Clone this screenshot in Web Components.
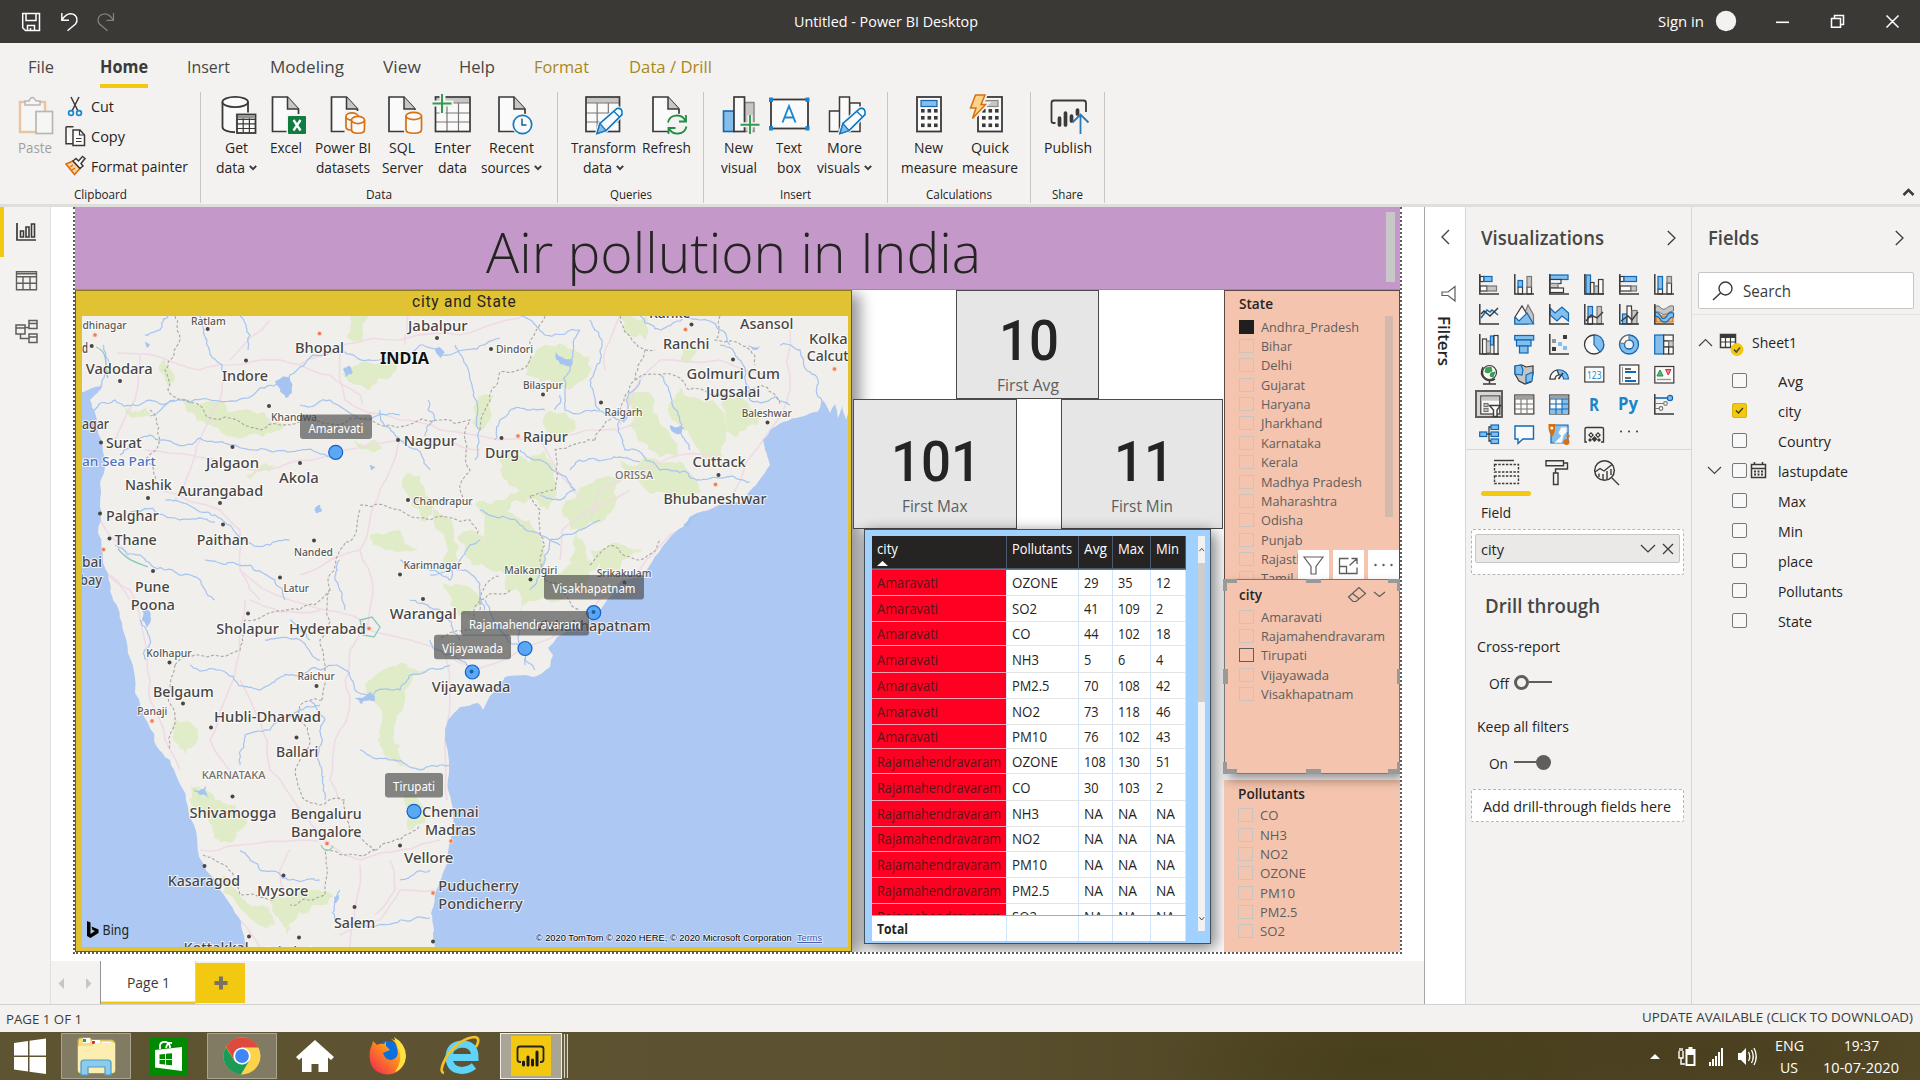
<!DOCTYPE html>
<html lang="en">
<head>
<meta charset="utf-8">
<title>Untitled - Power BI Desktop</title>
<style>
html,body{margin:0;padding:0}
body{width:1920px;height:1080px;overflow:hidden;background:#f3f2f1;font-family:"Open Sans","Noto Sans","Liberation Sans",sans-serif;color:#252423}
</style>
</head>
<body>
<power-app></power-app>
<script>
const define=(name,css,html)=>customElements.define(name,class extends HTMLElement{
  connectedCallback(){
    if(this.shadowRoot)return;
    const root=this.attachShadow({mode:'open'});
    const t=document.createElement('template');
    t.innerHTML='<style>*{box-sizing:border-box}svg{display:block;flex:none;overflow:visible}'+css+'</style>'+(typeof html==='function'?html(this):html);
    root.appendChild(document.importNode(t.content,true));
  }
});
// Text squeezed or stretched to a known advance width.
customElements.define('fit-text',class extends HTMLElement{
  connectedCallback(){
    if(this.shadowRoot)return;
    const w=+this.getAttribute('w'),s=this.getAttribute('s')||15,h=this.getAttribute('h')||20;
    this.attachShadow({mode:'open'}).innerHTML=`<style>:host{display:block;flex:none;width:${w}px;height:${h}px;font-size:${s}px;line-height:${h}px;white-space:nowrap}span{display:inline-block;transform-origin:0 50%}</style><span><slot></slot></span>`;
    const span=this.shadowRoot.querySelector('span');
    const n=span.getBoundingClientRect().width;
    if(n>0)span.style.transform=`scaleX(${w/n})`;
  }
});
const T=(t,w,s=15,st='',h=20)=>`<fit-text w="${w}" s="${s}" h="${h}" style="${st}">${t}</fit-text>`;
const S=(x,y,w,h,body,st='')=>`<svg width="${w}" height="${h}" viewBox="${x} ${y} ${w} ${h}" fill="none" stroke-width="1.2" style="${st}">${body}</svg>`;
const K='#3b3a39';

/* ---------- title bar ---------- */
define('title-bar',`:host{display:flex;height:43px;background:#3b3936;color:#fff;align-items:center}
.l{display:flex;width:794px;padding-left:20px;gap:14px}.r{display:flex;margin-left:auto;align-items:center}`,
`<div class="l">${S(20,11,24,24,'<path stroke="#fff" stroke-width="1.5" d="M22.7 14.5H39.5V31.5H25.5L22.7 28.8ZM26 14.5V21.5H36V14.5M27.5 31.5V26.5H34.5V31.5M30.5 29v2"/>')}
${S(58,11,22,24,'<path stroke="#fff" stroke-width="1.4" d="M61.8 14V21.3H69M62 21C65 16 69 14 73 15.2C77.5 17 78 22 75.5 25L67.5 31.8"/>')}
${S(94,11,22,24,'<path stroke="#85827f" stroke-width="1.2" d="M113.5 14V21.3H106.5M113.3 21C110 16 106 14 102.5 15.2C97.5 17 97 22 99.5 25L107.5 31.8"/>')}</div>
${T('Untitled - Power BI Desktop',184,15,'margin-top:-2px')}
<div class="r">${T('Sign in',46,15,'margin-top:-2px')}${S(1704,11,216,22,`<ellipse cx="1726" cy="21" rx="10.2" ry="10.2" fill="#f3f2f1"/><path stroke="#fff" stroke-width="1.6" d="M1776 22.3H1789"/><path stroke="#fff" stroke-width="1.5" d="M1831.5 18.5H1840.5V27.2H1831.5ZM1834.5 18V15.5H1843.5V24.5H1841M1886.5 15.5L1898.5 27.5M1898.5 15.5L1886.5 27.5"/>`,'')}</div>`);

/* ---------- ribbon ---------- */
const doc=(x)=>`<path fill="#fafafa" stroke="${K}" stroke-width="1.7" d="M${x} 97H${x+15}L${x+26} 109V131.5H${x}Z"/><path stroke="${K}" stroke-width="1.5" fill="#c8c6c4" d="M${x+15} 97V109H${x+26}"/>`;
const grid=(x,y,w,h)=>`<rect x="${x}" y="${y}" width="${w}" height="${h}" fill="#fafafa"/><rect x="${x}" y="${y}" width="${w}" height="6" fill="#c8c6c4"/><path stroke="#797775" stroke-width="1.2" d="M${x} ${y+6}h${w}M${x} ${y+16}h${w}M${x} ${y+25}h${w}M${x+w/3} ${y+6}v${h-6}M${x+w*2/3} ${y+6}v${h-6}"/><rect x="${x}" y="${y}" width="${w}" height="${h}" stroke="${K}" stroke-width="1.7"/>`;
const cyl=(x,y,w,h,c)=>`<path fill="#fafafa" stroke="${c}" stroke-width="1.7" d="M${x} ${y+4}V${y+h-4}C${x} ${y+h+1} ${x+w} ${y+h+1} ${x+w} ${y+h-4}V${y+4}"/><ellipse cx="${x+w/2}" cy="${y+4}" rx="${w/2}" ry="3.6" fill="#fafafa" stroke="${c}" stroke-width="1.7"/>`;
const pencil=(x,y)=>`<path d="M${x} ${y}L${x+3} ${y-10}L${x+20} ${y-25}Q${x+26} ${y-26} ${x+25} ${y-19}L${x+9} ${y-3}Z" fill="#fafafa" stroke="#f3f2f1" stroke-width="4"/><path d="M${x} ${y}L${x+3} ${y-10}L${x+20} ${y-25}Q${x+26} ${y-26} ${x+25} ${y-19}L${x+9} ${y-3}Z" fill="#fafafa" stroke="#0078c8" stroke-width="1.6"/><path d="M${x} ${y}L${x+3} ${y-10}L${x+9} ${y-3}Z" fill="#83beec" stroke="#1a75b8"/><path stroke="#0078c8" d="M${x+17} ${y-22}l5 5"/>`;
const calc=(x,c,cs)=>`<rect x="${x}" y="97" width="24" height="34.5" fill="#fafafa" stroke="${K}" stroke-width="1.8"/><rect x="${x+4}" y="100.5" width="16" height="6" fill="${c}" stroke="${cs}"/><g fill="${K}">${[110,117,124.5].map(y=>[4,10.5,17].map(d=>`<rect x="${x+d}" y="${y-1}" width="3.6" height="3.6"/>`).join('')).join('')}</g>`;
const ic={
get:`<path fill="#fafafa" stroke="${K}" stroke-width="1.8" d="M222.5 102V127C222.5 134 248 134 248 127V102"/><ellipse cx="235.2" cy="102" rx="12.8" ry="5.2" fill="#fafafa" stroke="${K}" stroke-width="1.8"/><rect x="235" y="112.5" width="22" height="23" fill="#f3f2f1"/><rect x="237" y="114.5" width="18.5" height="18.5" fill="#fafafa" stroke="${K}" stroke-width="1.8"/><path d="M237 119.3h18.500M237 123.8h18.500M237 128.500h18.500M243.2 118v15M249.4 118v15" stroke="${K}"/><rect x="238" y="115.300" width="16.500" height="3" fill="#979593"/>`,
excel:doc(272.5)+`<rect x="286.500" y="114" width="21" height="22" fill="#f3f2f1"/><rect x="288" y="116" width="18" height="18" rx="1" fill="#107c41"/><path d="M293.500 120l7 10.500M300.500 120l-7 10.500" stroke="#fff" stroke-width="2.300"/>`,
pbi:doc(331)+`<path fill="#f3f2f1" d="M344 111H359V114H366V135H344Z"/>`+cyl(345.500,112.500,12,18,'#d87010')+cyl(351,116,13,17.500,'#d87010'),
sql:doc(389)+`<rect x="404" y="110" width="20" height="25" fill="#f3f2f1"/>`+cyl(406,112,15.500,21.500,'#d87010'),
enter:grid(435,97,34.500,34.500)+`<path stroke="#f3f2f1" stroke-width="6" d="M442 92v22M432 103.500h21"/><path stroke="#2f9c51" stroke-width="2" d="M441.500 94v19M432 103.500h19"/>`,
recent:doc(499)+`<circle cx="522.500" cy="124.500" r="11" fill="#f3f2f1"/><circle cx="522.500" cy="124.500" r="9.200" fill="#fafafa" stroke="#0f7cc4" stroke-width="1.700"/><path stroke="#1a5f95" stroke-width="1.500" d="M522 118.500V125h4.500"/>`,
transform:grid(586,97,33.500,34.500)+pencil(597,133.500),
refresh:doc(653)+`<circle cx="677" cy="124.500" r="11" fill="#f3f2f1"/><path stroke="#218d42" stroke-width="1.800" d="M668 122.500C669.500 114 682 113 685.500 121M686 115v6.500h-7M686.500 126.500C684.500 135 673 136 669 128.500M668.500 134v-6h7"/>`,
newv:`<rect x="723" y="111" width="10.500" height="20.500" fill="#83beec" stroke="#1a66a8" stroke-width="1.600"/><rect x="744" y="102.500" width="9.500" height="29" fill="#c8c6c4" stroke="#8a8886" stroke-width="1.500"/><rect x="733.500" y="97" width="10.500" height="34.500" fill="#fafafa" stroke="${K}" stroke-width="1.700"/><path stroke="#f3f2f1" stroke-width="5" d="M740 124.700h19M749.500 115v19"/><path stroke="#2f9c51" stroke-width="1.900" d="M740 124.700h19M749.500 115v19"/>`,
text:`<rect x="771" y="99.500" width="37" height="29" fill="#fafafa" stroke="${K}" stroke-width="1.800"/><g fill="#1a86d0"><rect x="769" y="97.500" width="4" height="4.500"/><rect x="805.500" y="97.500" width="4" height="4.500"/><rect x="769" y="126" width="4" height="4.500"/><rect x="805.500" y="126" width="4" height="4.500"/></g><path stroke="#1a86d0" stroke-width="1.900" d="M782.500 122.500L789 106l6.500 16.500M784.500 117.500h9"/>`,
more:`<rect x="829" y="111" width="10.500" height="20.500" fill="#fafafa" stroke="${K}" stroke-width="1.500"/><rect x="849" y="103" width="10.500" height="28.500" fill="#fafafa" stroke="${K}" stroke-width="1.500"/><rect x="839" y="97" width="10" height="34.500" fill="#fafafa" stroke="${K}" stroke-width="1.500"/>`+pencil(839.500,133.500),
newm:calc(916.500,'#83beec','#1a66a8'),
quick:calc(978,'#c8c6c4','#8a8886')+`<path d="M975.500 95H985L981 104.500H985.500L972.500 118.500L976 108H970.500Z" fill="#fbd38a" stroke="#f3f2f1" stroke-width="5"/><path d="M975.500 95H985L981 104.500H985.500L972.500 118.500L976 108H970.500Z" fill="#fbd38a" stroke="#d87010" stroke-width="1.500"/>`,
pub:`<path stroke="${K}" stroke-width="1.800" d="M1055 123H1053Q1051 123 1051 121V103Q1051 100.500 1053.500 100.500H1083Q1085.500 100.500 1085.500 103V112"/><path stroke="${K}" stroke-width="3.700" stroke-linecap="round" d="M1059 118v7M1065 113v12M1071 116v5M1077 110v4"/><path stroke="#f3f2f1" stroke-width="5" d="M1080 134V116"/><path stroke="#2a7ab8" stroke-width="1.800" d="M1080 134V115M1072 122.500L1080 114.500L1088 122.500"/>`
};
define('ribbon-button',`:host{display:flex;flex-direction:column;align-items:center;width:var(--w);margin-left:var(--ml,0)}
.x{height:41.500px}.y{display:flex;gap:4px;height:20px;align-items:center}`,e=>{
 const c=+e.getAttribute('cx'),l=e.getAttribute('lines').split('|').map(a=>a.split(','));
 return `<div class="x">${S(c-20,95,40,40,ic[e.getAttribute('icon')])}</div>`+l.map(a=>`<div class="y">${T(a[0],a[1],15)}${a[2]?'<svg width="8" height="6" viewBox="0 0 8 6" fill="none" style="margin-top:2px"><path d="M.8 .8L4 4.200L7.200 .8" stroke="#3b3a39" stroke-width="1.900"/></svg>':''}</div>`).join('')});
define('ribbon-group',`:host{display:flex;flex-direction:column;width:var(--w);height:111px;border-right:1px solid #c8c6c4}
.b{display:flex;height:99px;padding-top:3px}.l{display:flex;justify-content:center}`,
e=>`<div class="b"><slot></slot></div><div class="l">${T(e.getAttribute('label'),e.getAttribute('lw'),12.5,'',16)}</div>`);
const btns=(start,arr)=>{let p=start;return arr.map(([c,w,i,l])=>{const ml=c-w/2-p;p=c+w/2;return `<ribbon-button cx="${c}" icon="${i}" lines="${l}" style="--w:${w}px;--ml:${ml}px"></ribbon-button>`}).join('')};
define('clipboard-tools',`:host{display:flex;padding:1px 0 0 15px}.p{width:40px;display:flex;flex-direction:column;align-items:center;color:#a19f9d}.c{padding-left:10px}.r{display:flex;height:30px;align-items:center;gap:4px}`,
`<div class="p">${S(17,96,40,40,`<g opacity=".55"><rect x="22" y="102" width="25" height="30" fill="#fafafa" stroke="#e0a060" stroke-width="2.400"/><path d="M27 105V101H31Q34 94 38 101H42V105Z" fill="#fafafa" stroke="#8a8886" stroke-width="1.500"/><rect x="38" y="111.500" width="16.500" height="22" fill="#fafafa" stroke="#8a8886" stroke-width="1.700"/></g>`)}<div style="height:.5px"></div>${T('Paste',34,15)}</div>
<div class="c" style="margin-top:-5px"><div class="r">${S(65,96,22,22,`<path stroke="${K}" stroke-width="1.500" d="M71 98L78 112M79 98L72 112"/><g stroke="#1a86d0" stroke-width="1.700"><circle cx="71" cy="114" r="2.400"/><circle cx="79" cy="114" r="2.400"/></g>`)}${T('Cut',23)}</div>
<div class="r">${S(65,126,22,22,`<path fill="#fafafa" stroke="${K}" stroke-width="1.500" d="M66 127.700h7.500M66 127.700v17H73"/><path fill="#fafafa" stroke="${K}" stroke-width="1.500" d="M73 131h7l4.500 5v10.500H73Z"/><path stroke="${K}" d="M79.500 131v5h5M76 139.500h5.500M76 142.500h5.500"/>`)}${T('Copy',34)}</div>
<div class="r">${S(65,156,22,22,`<path fill="#fbd0a0" stroke="#d87010" stroke-width="1.600" d="M66 165L73 162L80 169.500L74.500 175.500Z"/><path fill="#fafafa" stroke="${K}" stroke-width="1.500" d="M73 162L76 159.500L78.500 162L82.500 157.500L85 159.500L81 164.500L83 167L80 169.500Z"/><path stroke="#d87010" d="M70 168l3-2M72 171l3-2"/>`)}${T('Format painter',97)}</div></div>`);
define('ribbon-bar',`:host{display:block;height:164px;background:#f3f2f1;border-bottom:3px solid #dfdedd}
nav{display:flex;height:49px;padding-left:28px;align-items:flex-start;color:#484644}
nav div{display:flex;flex-direction:column;height:45px;padding-top:12.500px;margin-right:var(--g)}
nav .on{border-bottom:4px solid #f2c811;font-weight:700;color:#3b3a39}.g{color:#a8871c}
.row{display:flex;height:112px;align-items:flex-start}.end{margin-left:auto;padding:94px 4px 0 0}`,
`<nav>${[['File',26,46],['Home',48,39,'on'],['Insert',43,40],['Modeling',74,39],['View',38,38],['Help',36,39],['Format',55,40,'g'],['Data / Drill',83,0,'g']].map(a=>`<div class="${a[3]||''}" style="--g:${a[2]}px">${T(a[0],a[1],17,'',22)}</div>`).join('')}</nav>
<div class="row">
<ribbon-group label="Clipboard" lw="53" style="--w:201px"><clipboard-tools></clipboard-tools></ribbon-group>
<ribbon-group label="Data" lw="26" style="--w:357px">${btns(201,[[236,46,'get','Get,23|data,29,1'],[286,40,'excel','Excel,32'],[342.500,58,'pbi','Power BI,56|datasets,54'],[402,42,'sql','SQL,26|Server,41'],[452.500,42,'enter','Enter,37|data,29'],[511,64,'recent','Recent,45|sources,49,1']])}</ribbon-group>
<ribbon-group label="Queries" lw="42" style="--w:146px">${btns(558,[[603,66,'transform','Transform,65|data,29,1'],[666,50,'refresh','Refresh,49']])}</ribbon-group>
<ribbon-group label="Insert" lw="31" style="--w:184px">${btns(704,[[738.500,40,'newv','New,29|visual,36'],[789,30,'text','Text,26|box,24'],[844.500,56,'more','More,35|visuals,43,1']])}</ribbon-group>
<ribbon-group label="Calculations" lw="66" style="--w:143px">${btns(888,[[928.500,56,'newm','New,29|measure,56'],[990,56,'quick','Quick,38|measure,56']])}</ribbon-group>
<ribbon-group label="Share" lw="31" style="--w:74px">${btns(1031,[[1067.500,50,'pub','Publish,48']])}</ribbon-group>
<div class="end">${S(1900,186,16,12,`<path stroke="${K}" stroke-width="2.500" d="M1903.500 195L1908.500 190L1913.500 195"/>`)}</div></div>`);

/* ---------- left rail ---------- */
define('nav-rail',`:host{display:block;width:51px;height:797px;border-right:1px solid #e1dfdd;background:#f3f2f1}div{height:49.500px;border-left:4px solid transparent;display:flex;align-items:center;padding-left:10px}.on{border-color:#f2c811}`,
`<div class="on">${S(14,220,24,24,`<path stroke="${K}" stroke-width="1.700" d="M17 223V240H36"/><path stroke="${K}" stroke-width="1.600" d="M20.500 231h3v6h-3ZM26 227h3v10h-3ZM31.500 224h3v13h-3Z"/>`)}</div>
<div>${S(14,269.700,24,24,`<path stroke="#605e5c" stroke-width="1.400" d="M16.500 272.500H36.500V290.500H16.500ZM16.500 277.500H36.500M16.500 284H36.500M23 277.500V290.500M30 277.500V290.500M16.500 274.500h20"/>`)}</div>
<div>${S(14,319,24,24,`<path stroke="#605e5c" stroke-width="1.500" d="M16 325H25V334H16ZM16 328H25M29 320.500H37V328.500H29ZM29 323.500H37M29 334H37V342.500H29ZM29 337H37M25 327.500H29M20.500 334V338.500H29"/>`)}</div>`);

/* ---------- map ---------- */
let seed=7;const rnd=()=>{seed=(seed*16807)%2147483647;return seed/2147483647-.5};
const rough=(p,n=3,a=.22)=>{for(let k=0;k<n;k++){const q=[];for(let i=0;i<p.length-1;i++){const [x,y]=p[i],[u,v]=p[i+1],d=Math.hypot(u-x,v-y)*a;q.push(p[i],[(x+u)/2+rnd()*d,(y+v)/2+rnd()*d])}q.push(p[p.length-1]);p=q}return p};
const P=s=>s.trim().split(/\s+/).map(a=>a.split(',').map(Number));
const D=(p,z)=>'M'+p.map(a=>a[0].toFixed(1)+' '+a[1].toFixed(1)).join('L')+(z?'Z':'');
const wild=(s,n,a)=>D(rough(P(s),n,a));
const blob=s=>{const p=P(s);p.push(p[0]);return D(rough(p,3,.45),1)};
const west=D([...rough(P('82,392 88,390 103,386 90,400 95,413 98,433 105,467 100,483 102,513 98,533 103,563 110,583 113,600 122,623 128,653 135,693 148,723 157,747 170,760 178,780 188,807 197,837 203,863 220,890 235,913 243,933 247,948'),2,.2),[82,948]],1);
const east=D([...rough(P('849,405 846,420 842,405 838,418 835,404 830,413 823,400 817,412 800,417 783,422 770,430 763,440 765,450 770,465 758,482 748,493 743,503 713,508 693,515 683,527 672,535 662,547 650,565 637,577 622,580 607,600 593,617 570,630 548,648 553,655 550,667 533,677 505,677 493,693 483,710 478,703 460,707 448,720 445,740 449,767 449,793 453,810 455,827 448,863 443,873 435,893 431,913 434,930 435,948'),2,.16),[849,948]],1);
const greens=['180,397 220,400 227,412 265,413 285,425 250,434 215,427 187,412','343,375 360,362 397,358 390,378 370,390 350,382','350,316 370,316 360,342 347,338','482,395 494,395 482,430 472,422','407,473 425,490 432,515 420,522 412,500','370,535 400,530 418,548 400,552 375,545','458,540 470,530 500,545 545,550 540,580 520,590 490,570 465,555','475,505 500,500 520,490 545,450 548,510 515,500 500,515 480,512','433,508 452,520 458,560 440,572','525,375 545,345 575,350 592,370 575,385 550,380','620,316 647,316 645,340 628,335','683,350 700,345 690,362 680,360','680,388 712,400 728,430 722,455 700,460 688,430 672,420','625,400 650,393 668,430 678,455 650,450 630,425','722,400 748,403 757,425 735,437 725,420','620,460 655,458 692,475 702,492 660,492 630,480','570,500 595,480 622,470 617,500 590,522 570,530','500,455 530,463 553,480 545,492 515,487 500,470','488,510 530,520 547,560 535,590 505,590 485,560','590,550 620,545 642,550 620,572 600,577','515,580 550,575 580,563 603,558 587,590 550,602 520,612','383,670 402,663 428,672 405,690 397,715 400,745 407,767 390,760 378,740 372,700 365,685','175,718 190,722 198,740 185,754 173,740','190,785 215,800 235,805 247,820 235,838 220,842 205,815 192,805','270,900 290,897 335,893 325,905 300,912 288,935 275,915','220,873 240,895 262,905 275,925 265,928 240,908','442,583 465,585 482,600 470,617 450,605','403,795 418,800 425,822 408,830','125,408 145,408 150,416 130,417','545,415 565,412 575,430 560,440 548,432','355,440 375,440 382,448 362,450','165,355 175,380 168,385 160,365','570,560 575,530 585,545 580,575','245,475 275,465 270,472 250,480'];
const rivers=['103,345 110,370 100,390','150,416 180,400 260,388 290,375 345,352 420,345 500,338','200,316 207,340 222,365 225,380','240,316 250,335 248,350','120,455 150,435 165,440 200,438 255,450 290,452 330,457','380,410 400,440 430,470','168,316 160,330 145,335','300,405 330,400 370,420 400,415','428,400 435,420 425,436','455,345 470,380 480,430 475,460','520,316 545,335 580,330','580,330 570,370 565,410','565,410 600,411 620,420 625,450 640,452 660,470 700,480 720,478 750,482','545,410 530,410 510,410 500,420 495,440','590,320 600,350 590,380 600,410','660,375 672,400 680,430 690,450','640,380 628,410 622,420','720,345 740,360 750,400 790,405','780,345 800,350 818,380 825,410','570,470 580,460 605,460 640,462','520,450 540,460 575,490 560,500 540,495','165,500 200,512 215,515 230,525 270,545 290,540','130,512 180,520 215,522','115,545 140,555 165,570 200,580 215,600','205,560 240,565 275,580 285,600','340,560 335,580 345,610','480,540 460,560 450,580 430,570 400,560','430,575 465,570 480,590 485,610','485,600 500,630 520,645 525,665','520,620 523,650 535,670','530,590 545,560 550,540 600,520','190,665 220,670 260,690 300,675 335,665','335,665 355,690 370,697 400,690 410,675 450,665','240,765 245,735 270,730 300,710 320,705','310,700 325,720 318,760 325,800','360,750 390,760 420,770 450,765','265,640 300,640 320,660','140,620 150,640 145,660','290,620 310,640','240,850 260,870 290,880 320,880','340,890 335,920 360,925 400,920 430,918','400,880 430,870','90,412 115,400 140,405 175,400','560,395 555,410','480,510 520,525 560,545','640,316 660,330 700,320 730,345','430,640 460,660 475,670','410,600 440,610 460,640'];
const roads=['117,353 160,357 200,370 225,365 260,360 300,365 330,375 360,395 362,405','228,370 220,400 200,440 190,470 175,500','230,360 270,320','340,350 345,400 400,420 440,430 500,440 545,440 600,430 640,425','300,365 340,345 400,340 460,335 520,318','400,440 440,440 480,450','145,450 190,455 225,465 260,470 300,460 345,450 400,440','405,345 408,316','130,490 160,490 220,510 240,530 240,570 250,590 260,600','104,570 130,590 140,620 150,680 150,700 165,740 180,770','240,570 290,600 350,615 368,625','368,625 350,650 345,680 350,700 335,740 330,780 340,800','368,630 410,640 440,650 475,670','368,625 372,580 360,550 370,520 380,490 390,470 400,440','245,600 240,650 225,700 210,740 240,780','240,680 260,720 270,770 300,810 325,840','200,850 240,845 300,840 330,842','330,845 360,860 400,850 440,840','360,865 355,910 350,947','445,650 450,700 445,750 447,800','475,670 520,650 580,620 630,580 670,535 730,500 770,430','770,430 790,390 790,330','620,425 640,380 660,360 720,360 780,375','590,520 600,490 640,470 680,455 720,458','560,560 562,530 590,510 630,490','620,316 605,350 605,370','540,440 565,480 580,500','95,440 80,460','110,575 130,600','250,600 280,612 320,610','260,947 240,920','290,850 280,870 285,895','435,890 400,890 380,920 340,935','390,860 395,890 375,915','140,355 135,400 110,450','100,520 130,560','360,550 330,560 300,575'];
const borders=['175,316 180,340 165,370 180,400 210,418 260,430 290,425 310,415 340,425 390,425 440,420 470,420 465,440','150,410 160,440 145,460 155,480','465,440 470,470 460,490 472,505','545,316 530,360 500,372 490,400 480,430','620,316 632,340 645,350 635,380 620,410 595,440','635,380 680,378 690,390 725,395 760,385 780,405','645,350 655,350','720,316 715,340 750,350 755,365','595,440 555,450 555,490 530,495 540,510 545,545 540,560 545,580','545,580 560,590 580,610','360,505 400,510 430,520 470,520 478,535','360,510 355,535 340,550 330,590 320,640 322,700','175,665 200,655 240,650 245,620 300,610 330,590','175,665 170,690 175,720 168,750','322,700 300,705 300,720 310,740 300,760 305,800 320,805 345,800 350,830 375,850','375,850 345,855 325,850 325,895 290,905','203,855 225,865 240,895 275,900','510,590 480,600 470,630 440,640','590,565 610,545 640,560 660,540','480,610 490,580 500,575','375,850 400,840 420,825'];
const lab=[
// text,x,baseline,width,kind
['dhinagar',82.500,328.700,44,1],['Ratlam',191,324.700,34.700,1],['Jabalpur',408,330.700,59.700],['d',82,353,6],['Bhopal',295,353,49],['INDIA',380,363.500,49,2],['Dindori',496,353,37,1],['Vadodara',85.700,374,67],['Indore',222,381,46],['Bilaspur',523,388.700,39.700,1],['Khandwa',271,420.700,46,1],['agar',82,428.700,27],['Surat',106,448,35.700],['an Sea Part',82,465.700,73.700,3],['Jalgaon',206,468,53],['Nashik',125,490,46.700],['Aurangabad',177.700,496,85.500],['Akola',279,482.700,39.700],['Nagpur',403.700,446,53],['Chandrapur',413,504.500,59.700,1],['Palghar',106,520.700,52.700],['Paithan',196.700,544.700,52],['Thane',114.500,545.300,42.300],['Nanded',294,556,39,1],['bai',82,567,20],['bay',80,585,22],['Karimnagar',403.500,569.300,58,1],['Malkangiri',504.300,574.300,53,1],['Pune',135,592,34.700],['Latur',283.500,591.700,25.500,1],
['Ranke',649,317.700,41.500],['Asansol',740,329.300,53.300],['Ranchi',663,349,46.300],['Kolka',809,343.700,38.500],['Calcut',806.700,361.300,42],['Golmuri Cum',686.500,379.300,93.500],['Jugsalai',706,396.700,54.300],['Raigarh',604.500,416.300,38,1],['Baleshwar',741.700,417.300,50,1],['Raipur',523,442.300,44.700],['Durg',485,458,34],['Cuttack',692.500,467.300,53.300],['ORISSA',615,478.500,38,4],['Bhubaneshwar',663.500,504,103],['Srikakulam',596.700,576.500,54.700,1],
['Poona',130.700,609.700,44.300],['Warangal',389.700,619,67],['Sholapur',216.300,633.700,62.500],['Hyderabad',289,634.300,76.700],['Kolhapur',146.300,657.300,45.400,1],['Raichur',297.500,680.300,37.300,1],['Belgaum',153,696.700,60.700],['Vijayawada',431.700,691.700,78.700],['Panaji',137.300,715.300,30,1],['Hubli-Dharwad',214,721.700,107],['Ballari',276,757.300,42.300],['KARNATAKA',201.700,779.300,64,4],['Shivamogga',189.500,817.700,87],['Bengaluru',290.700,819.300,71],['Bangalore',291,837.300,70.500],['Chennai',422,817.300,56.700],['Madras',425,835.300,51],['Vellore',404,863,49.300],['Kasaragod',167.700,886,72.300],['Mysore',257,896,51.300],['Puducherry',438.300,891.300,80.400],['Pondicherry',438.300,909.300,84.400],['Salem',334,927.500,41.300],['Kottakkal',183.500,953,65],['Coimbatore',262,957,72],['Vishakhapatnam',535,631.300,115.700]];
const kinds=[[15,'#484644',500],[11.500,'#5a5856',500],[15.500,'#111',700],[12,'#4f74c4',500],[11,'#75716e',500]];
const dots='91.700,346 207.700,329 437,338 491,349 120,381 246,360.500 269,406 101,442.500 232.500,447 300,463 398,440 501.500,438 148,498 220,503 408,500 100,513.500 223,524.500 109.500,538.500 314,540.500 153,571 280,577.500 400,574.500 543,394.500 601,402.500 691.500,324.500 733,359.500 767.500,422.500 718.500,475 530.500,579.500 624.500,582.500 423,599 248,613.500 169.500,662.500 316.500,686 183,703.500 211,727.500 296.500,737.500 232.500,796.500 400,845.500 204.500,866 283.500,875.500 354.500,907 249,936.500 299,937.500 433,941.500'.split(' ').map(a=>a.split(','));
const red='95,335 319.500,333.500 518,436 685.500,329.500 834.500,369 715.500,484.500 103.500,549.500 369,628.500 152,721 327,843.500 451,841 433,893'.split(' ').map(a=>a.split(','));
const txt=([t,x,y,w,k=0])=>`<text x="${x}" y="${y}" textLength="${w}" lengthAdjust="spacingAndGlyphs" font-size="${kinds[k][0]}" fill="${kinds[k][1]}" font-weight="${kinds[k][2]}">${t}</text>`;
const tips=[['Amaravati',300,414.500,72,308.500,55],['Visakhapatnam',544,575,100,552.500,83],['Rajamahendravaram',461,611,128,469,111.500],['Vijayawada',434,634.700,77,442,61],['Tirupati',385,773,58,393,42]];
define('map-visual',`:host{display:block;width:777px;height:662px;background:#e0c232;border:1px solid #6b5d1c;border-top-color:#8f7a1c;box-shadow:8px 4px 14px rgba(0,0,0,.42);box-sizing:border-box}
.t{height:25px;display:flex;justify-content:center;font-family:Roboto,sans-serif;padding:1px 0 0 2px}.m{margin-left:6px;font-family:"Noto Sans","Open Sans",sans-serif}`,
()=>`<div class="t">${T('city and State',104.500,16,'letter-spacing:.8px')}</div><svg class="m" style="overflow:hidden" width="766" height="631" viewBox="82 316 766 631" fill="none">
<rect x="82" y="316" width="766" height="631" fill="#f1efeb"/>
<g fill="#dfebc5" opacity=".9">${greens.map(g=>`<path d="${blob(g)}"/>`).join('')}</g>
<g stroke="#efdbe6" stroke-width="1.600">${roads.map(g=>`<path d="${wild(g,2,.14)}"/>`).join('')}</g>
<g stroke="#a6c4f1" stroke-width="1.200">${rivers.map(g=>`<path d="${wild(g,4,.32)}"/>`).join('')}</g>
<g stroke="#aaa6a4" stroke-width="1.100" stroke-dasharray="3 2">${borders.map(g=>`<path d="${wild(g,3,.3)}"/>`).join('')}</g>
<path fill="#adc8f2" d="${west}"/><path fill="#adc8f2" d="${east}"/>
<g fill="#a6c4f1">${['275,382 290,378 292,390 286,398 280,392','343,370 350,366 352,374 345,377','436,348 445,352 440,358','556,352 572,358 570,366 560,364','670,425 684,428 680,434 673,432','760,346 755,350 748,346','315,508 320,505 322,512 316,513','193,788 206,786 210,798 200,795','355,698 370,692 375,700 362,704','142,610 150,612 147,628','330,895 340,895 335,903','144,342 150,344 147,348','620,418 628,416 624,423','370,465 376,468 371,470','683,524 693,516 700,513 690,526'].map(g=>`<path d="${blob(g)}"/>`).join('')}</g>
<g stroke="#8dcabb" stroke-width="1.300"><path d="M96 347C110 352 104 368 108 378M118 549C128 560 130 560 148 567M360 620L372 617L380 627L374 637L363 635ZM321 845C324 852 330 852 333 846"/></g>
<g fill="#484644">${dots.map(d=>`<circle cx="${d[0]}" cy="${d[1]}" r="2"/>`).join('')}</g>
<g>${red.map(d=>`<circle cx="${d[0]}" cy="${d[1]}" r="2.600" fill="#f9d5c9"/><circle cx="${d[0]}" cy="${d[1]}" r="1.700" fill="#e87f52"/>`).join('')}</g>
<g paint-order="stroke" stroke="#fff" stroke-opacity=".75" stroke-width="2">${lab.map(txt).join('')}</g>
<g fill="#4ea2f4" fill-opacity=".92" stroke="#1260d0" stroke-width="1.200">${[[335.700,452.300],[593.700,612.700],[525,648.500],[472.300,672],[414,811.300]].map(c=>`<circle cx="${c[0]}" cy="${c[1]}" r="7"/>`).join('')}</g><circle cx="593.500" cy="612" r="2" fill="#1e5fa8"/><circle cx="471.500" cy="671.500" r="2" fill="#1e5fa8"/>
${tips.map(t=>`<rect x="${t[1]}" y="${t[2]}" width="${t[3]}" height="24.500" rx="3" fill="#4a4a4a" fill-opacity=".66"/>`).join('')}
<g fill="#fff" font-size="12">${tips.map(t=>`<text x="${t[4]}" y="${t[2]+18.200}" textLength="${t[5]}" lengthAdjust="spacingAndGlyphs">${t[0]}</text>`).join('')}</g>
<path fill="#000" d="M87 921L90.500 922.500V934L95 931L92.500 930L91.500 926.500L98.500 929.500V933L90.500 938L87 936Z"/>
<text x="102.600" y="935.300" font-size="14.500" fill="#222" textLength="26.500" lengthAdjust="spacingAndGlyphs">Bing</text>
<g font-family="Liberation Sans" font-size="9.500" paint-order="stroke" stroke="#fff" stroke-opacity=".7" stroke-width="1.500"><text x="535.700" y="941" fill="#000" textLength="256" lengthAdjust="spacingAndGlyphs">© 2020 TomTom © 2020 HERE, © 2020 Microsoft Corporation</text><text x="797" y="941" fill="#3b56b0" text-decoration="underline" textLength="25" lengthAdjust="spacingAndGlyphs">Terms</text></g></svg>`);

/* ---------- cards and table ---------- */
define('card-visual',`:host{display:flex;flex-direction:column;align-items:center;width:var(--w);height:var(--h);background:#e6e6e6;border:1px solid #4a4a4a;padding-top:var(--p)}.v{font-family:Roboto,sans-serif;font-weight:500;color:#252423;display:flex;margin-left:3px}.l{color:#605e5c}`,
e=>`<div class="v">${T(e.getAttribute('value'),e.getAttribute('vw'),55,'',56)}</div><div class="l" style="margin-top:5px">${T(e.getAttribute('label'),e.getAttribute('lw'),16.500,'',22)}</div>`);
const R='Rajamahendravaram',A='Amaravati';
const rows=[[A,'OZONE',29,35,12,26.300],[A,'SO2',41,109,2,25.700],[A,'CO',44,102,18,24.500],[A,'NH3',5,6,4,27],[A,'PM2.5',70,108,42,25.500],[A,'NO2',73,118,46,25.600],[A,'PM10',76,102,43,24.700],[R,'OZONE',108,130,51,25.200],[R,'CO',30,103,2,26.500],[R,'NH3','NA','NA','NA',26],[R,'NO2','NA','NA','NA',24.700],[R,'PM10','NA','NA','NA',26],[R,'PM2.5','NA','NA','NA',26],[R,'SO2','NA','NA','NA',26]];
const pw={OZONE:46,SO2:25,CO:18.500,NH3:27,'PM2.5':37.500,NO2:28,PM10:35};
const nw=n=>n==='NA'?19:String(n).length*7.300;
define('table-visual',`:host{display:flex;width:347px;height:414.500px;background:#a0d1ff;border:1px solid #44505c;padding:6px 6px 3px 6.500px;box-shadow:6px 4px 14px rgba(0,0,0,.42),-4px 2px 12px rgba(0,0,0,.2)}
.t{width:314px}.r{display:grid;grid-template-columns:135px 72px 34px 38px 35px}.r>div{display:flex;align-items:center;border-right:1px solid #cfe6fb;border-bottom:1px solid #e4e4e4;background:#fff;padding:1px 0 0 5px}
.body .r>div:first-child{background:#ff0022;border-bottom-color:#ffa0b0;color:#5c1418}
.h>div{background:#252423;color:#fff;border-color:#4a5a6c;height:33px;padding-bottom:7px}.h{border-bottom:1.500px solid #118dff}
.body{height:345.500px;overflow:hidden;border-bottom:1.500px solid #7ab8f0}.f>div{height:25px;border-bottom:0;font-weight:700}
.s{width:7.500px;height:395px;margin-left:12px;background:#f1f1f1;display:flex;flex-direction:column}.s i{display:block;height:139px;background:#cdcdcd}
.c{position:relative}.c svg{position:absolute;left:5px;top:24.500px}`,
()=>`<div class="t"><div class="r h"><div class="c">${T('city',21,14)}<svg width="11" height="5"><path d="M0 5L5.500 0L11 5Z" fill="#fff"/></svg></div><div>${T('Pollutants',60,14)}</div><div>${T('Avg',23,14)}</div><div>${T('Max',26,14)}</div><div>${T('Min',23,14)}</div></div>
<div class="body">${rows.map(r=>`<div class="r" style="height:${r[5]}px"><div>${T(r[0],r[0]===A?61:124,14)}</div><div>${T(r[1],pw[r[1]],14)}</div>${[2,3,4].map(i=>`<div>${T(r[i],nw(r[i]),14)}</div>`).join('')}</div>`).join('')}</div>
<div class="r f"><div>${T('Total',31,14)}</div><div></div><div></div><div></div><div></div></div></div>
<div class="s"><svg width="7.500" height="26.500" viewBox="0 0 8 26"><path d="M1.500 15L4 12L6.500 15" stroke="#444" fill="none"/></svg><i></i><svg style="margin-top:auto" width="7.500" height="22" viewBox="0 0 8 22"><path d="M1.500 8L4 11L6.500 8" stroke="#444" fill="none"/></svg></div>`);

/* ---------- slicers ---------- */
const sw={Andhra_Pradesh:98,Bihar:31,Delhi:31,Gujarat:44,Haryana:49.500,Jharkhand:61.500,Karnataka:60,Kerala:37,'Madhya Pradesh':101,Maharashtra:76,Odisha:42,Punjab:41.500,Rajasthan:58,'Tamil Nadu':68,Amaravati:61,Rajamahendravaram:124,Tirupati:46,Vijayawada:68,Visakhapatnam:92.500,...pw};
define('slicer-visual',`:host{display:block;position:relative;width:176px;height:var(--h);background:#f4c4ae}
.in{height:100%;overflow:hidden;padding:var(--pt) 0 0 14px}.t{display:flex;height:var(--th);align-items:center;font-weight:600;padding-bottom:var(--pb)}
.r{display:flex;height:19.370px;align-items:center;gap:7.500px;color:#605e5c}.r i{width:14.500px;height:14px;border:1px solid #c8c4bf}.r i.on{background:#1f1f1f;border-color:#1f1f1f}.r i.hv{border-color:#605e5c}`,
e=>`<div class="in"><div class="t">${T(e.getAttribute('label'),e.getAttribute('lw'),14)}<slot name="head"></slot></div>${e.getAttribute('items').split(',').map(s=>`<div class="r"><i class="${e.getAttribute('checked')===s?'on':e.getAttribute('hover')===s?'hv':''}"></i>${T(s,sw[s],13.500)}</div>`).join('')}</div><slot></slot>`);

define('report-page',`:host{display:block;width:1373px;height:754px;background:#fff;padding-left:22px;overflow:hidden}
.p{width:1329px;height:747px;border:2px dotted #605e5c;border-top:0;overflow:hidden}
.b{height:83px;background:#c498c9;display:flex;justify-content:center;position:relative;padding:8px 8px 0 0;border-bottom:1px solid #a784aa}.b i{width:9px;height:70px;background:#c8c8c8;position:absolute;right:5px;top:5px}
.row{display:flex}.mid{width:372px;display:flex;flex-direction:column}.cards{display:flex;justify-content:space-between;padding:0 1px 0 .5px}
.bar{position:absolute;right:0;bottom:0;display:flex;gap:4px}.bar div{width:31px;height:29px;background:#fff}
.city{z-index:1;border:1px solid #777;box-shadow:4px 6px 10px rgba(0,0,0,.4)}
.city i{position:absolute;background:#999}.st{border:1px solid #5a4a44;border-width:1px 1px 0}`,
`<div class="p"><div class="b">${T('Air pollution in India',495,54.500,'font-weight:360',74)}<i></i></div>
<div class="row"><map-visual></map-visual>
<div class="mid"><card-visual value="10" vw="60" label="First Avg" lw="62" style="--w:143px;--h:109px;--p:22px;align-self:flex-start;margin-left:104px;box-sizing:border-box"></card-visual>
<div class="cards"><card-visual value="101" vw="90" label="First Max" lw="65.500" style="--w:164px;--h:130px;--p:34px;box-sizing:border-box"></card-visual><card-visual value="11" vw="60" label="First Min" lw="62" style="--w:162px;--h:130px;--p:34px;box-sizing:border-box"></card-visual></div>
<table-visual style="margin-left:12px;box-sizing:border-box"></table-visual></div>
<div><slicer-visual class="st" style="--h:288.500px;--pt:4px;--th:22px;--pb:3.500px;box-sizing:border-box" label="State" lw="34" checked="Andhra_Pradesh" items="Andhra_Pradesh,Bihar,Delhi,Gujarat,Haryana,Jharkhand,Karnataka,Kerala,Madhya Pradesh,Maharashtra,Odisha,Punjab,Rajasthan,Tamil Nadu"><div style="position:absolute;left:160px;top:25px;width:8px;height:201px;background:#d3b8ae"></div>
<div class="bar"><div>${S(1298.500,549.500,31,29,'<path stroke="#605e5c" d="M1304.500 556.500H1323.500L1316.500 566V573.500H1311.500V566Z"/>')}</div><div>${S(1333.500,549.500,31,29,'<path stroke="#605e5c" stroke-width="1.300" d="M1349 558H1340V573H1357.500V567M1340 566H1347V573M1350 565L1357.500 558M1352 558H1357.500V563.500"/>')}</div><div>${S(1368.500,549.500,31,29,'<path stroke="#605e5c" stroke-width="2.400" stroke-linecap="round" stroke-dasharray="0 8" d="M1376 564.500H1393"/>')}</div></div></slicer-visual>
<slicer-visual class="city" style="--h:195.500px;--pt:4.500px;--th:23px;--pb:1px;box-sizing:border-box" label="city" lw="23" hover="Tirupati" items="Amaravati,Rajamahendravaram,Tirupati,Vijayawada,Visakhapatnam"><span slot="head" style="margin-left:86px">${S(1348,586,40,20,'<path stroke="#605e5c" stroke-width="1.200" d="M1348.500 598L1359 588.500L1365.500 594.500L1356 602.500H1353ZM1352.500 594.500L1359.500 600M1374 593L1379.500 597.500L1385 593"/>')}</span>
<i style="left:-2px;top:-1px;width:14px;height:4px"></i><i style="left:-2px;top:-1px;width:4px;height:12px"></i><i style="left:81px;top:-1px;width:15px;height:4px"></i><i style="right:-1px;top:-1px;width:12px;height:4px"></i><i style="right:-1px;top:-1px;width:3px;height:12px"></i><i style="left:-2px;top:89px;width:5px;height:15px"></i><i style="right:-1px;top:89px;width:3px;height:15px"></i><i style="left:-2px;bottom:-1px;width:14px;height:5px"></i><i style="left:-2px;bottom:-1px;width:4px;height:12px"></i><i style="left:81px;bottom:-1px;width:15px;height:5px"></i><i style="right:-1px;bottom:-1px;width:12px;height:5px"></i><i style="right:-1px;bottom:-1px;width:3px;height:12px"></i></slicer-visual>
<slicer-visual style="--h:173px;--pt:3.500px;--th:22px;--pb:2px;margin-top:6px;box-sizing:border-box" label="Pollutants" lw="67" items="CO,NH3,NO2,OZONE,PM10,PM2.5,SO2"></slicer-visual></div>
</div></div>`);

/* ---------- page tabs ---------- */
define('page-tabs',`:host{display:flex;width:1373px;height:43px;background:#f3f2f1}.n{width:49px;display:flex;align-items:center}.t{width:96px;background:#fff;border:1px solid #979593;border-width:0 1px 0 1px;border-right-color:#d2d0ce;box-shadow:inset 0 -2.500px #f2c811;display:flex;align-items:center;justify-content:center;color:#3b3a39;padding-bottom:1px}.a{width:49px;height:40px;margin-top:2px;background:#f2c811;display:flex;align-items:center;justify-content:center}`,
`<div class="n">${S(51,970,49,24,'<path fill="#c8c6c4" d="M64 977V988L58.500 982.500ZM86 977V988L91.500 982.500Z"/>')}</div><div class="t">${T('Page 1',43,15)}</div><div class="a"><svg width="16" height="16"><path d="M8 1.500V14.500M1.500 8H14.500" stroke="#7a7360" stroke-width="4"/></svg></div>`);

/* ---------- filters pane ---------- */
define('filters-pane',`:host{display:flex;flex-direction:column;width:41px;height:797px;background:#fff;border-left:1px solid #a8a6a4}.v{writing-mode:vertical-rl;font-size:17px;font-weight:600;line-height:20px;letter-spacing:-.1px;margin:15px 0 0 9px;width:20px;color:#252423}`,
`${S(1425,207,40,94,'<path stroke="#484644" stroke-width="1.400" d="M1449 230L1442 237L1449 244"/><path stroke="#605e5c" stroke-width="1.200" d="M1455 286.500V301L1448 295.500H1442V292H1448Z"/>')}<div class="v">Filters</div>`);

/* ---------- visualizations pane ---------- */
const b=(x,y,w,h)=>`<rect x="${x}" y="${y}" width="${w}" height="${h}" fill="#83beec" stroke="#1268b3"/>`,
g=(x,y,w,h)=>`<rect x="${x}" y="${y}" width="${w}" height="${h}" fill="#c8c6c4" stroke="#797775"/>`,
w=(x,y,W,h)=>`<rect x="${x}" y="${y}" width="${W}" height="${h}" fill="#fafafa" stroke="${K}"/>`,
ax=`<path d="M.8 0V20H20" stroke="${K}" stroke-width="1.500"/>`,
L=(d,c=K,sw=1.300,f='none')=>`<path d="${d}" stroke="${c}" stroke-width="${sw}" fill="${f}"/>`,
F='#83beec',Bs='#1268b3';
const viz=[
w(1,2.500,4,5)+b(5,2.500,8,5)+w(1,12,7,5)+g(8,12,9.500,5)+ax,
w(4,13,4.500,7)+b(4,6.500,4.500,6.500)+w(13,13,4.500,7)+g(13,2.500,4.500,10.500)+ax,
b(1,1,18,4.500)+w(1,5.500,11,4)+g(1,9.500,8,4.500)+w(1,14,13.500,4.500)+ax,
b(2,1,4.500,19)+w(6.500,8.500,3.500,11.500)+g(10.500,12,4,8)+w(14.500,5.500,4.500,14.500)+ax,
w(1,2.500,4,5)+b(5,2.500,12.500,5)+w(1,12,11,5)+g(12,12,5.500,5)+ax,
w(4,15,4.500,5)+b(4,2.500,4.500,12.500)+w(13,9,4.500,11)+g(13,2.500,4.500,6.500)+ax,
ax+L('M2 14L8 6L11 8L13 6L19 11',Bs,1.500)+L('M2 10L5 7L11 12L19 4',K,1.500),
L('M10 11L14 1L19.500 11V20','#797775',1.200,'#c8c6c4')+L('M1 13L8 2L14 12L14 20H1Z',K,1.200,'#fafafa')+L('M1 13L5 17L13 9L19.500 20H.8V13',Bs,1.200,F),
L('M1 4L6 9L13 3L19.500 9V17L13 12L8 17L1 11Z',Bs,1.200,F)+ax,
b(4,2.500,4.500,17.500)+g(13,2.500,4.500,17.500)+w(4,13,4.500,7)+ax+L('M2 17L7 11L13 14L19 8',K,1.400),
b(3.500,10,4.500,10)+w(8,2,4.500,18)+g(13,6.500,5,13.500)+ax+L('M2 17L9 12L13 16L19 8',K,1.400),
L('M1 2H5Q9 8 14 3Q16 1 19.500 2V7Q16 7 13 10Q9 12 5 8H1Z','#797775',1,'#c8c6c4')+L('M2 12H19V18H2Z','#d87010',1.200,'#fbb060')+L('M1 8Q5 8 8 14Q11 16 14 10Q17 8 19.500 9V13Q16 13 14 17Q9 20 6 15Q4 12 1 12Z',Bs,1.200,F)+ax,
w(3.500,5,4,15)+g(7.500,7,4,12)+b(11.500,2,3,9)+w(15,1.500,4,18.500)+ax,
b(.7,1.500,19,4.500)+b(2.500,6,14.500,6)+b(5.500,12,8.500,7),
ax+`<g fill="${K}"><rect x="14" y="1" width="4" height="4"/><rect x="3" y="13" width="4" height="4"/></g><g fill="#83beec"><rect x="9" y="8" width="4" height="4"/><rect x="14" y="12" width="4" height="4"/></g><rect x="3" y="5" width="4" height="4" fill="#979593"/>`,
`<circle cx="10" cy="10.500" r="9.500" fill="#fafafa" stroke="${K}" stroke-width="1.300"/>`+L('M10 1A9.500 9.500 0 0 1 16 18L10 10.500Z',Bs,1.200,F),
`<circle cx="10" cy="10.500" r="7" stroke="${F}" stroke-width="5"/><circle cx="10" cy="10.500" r="9.500" stroke="${Bs}" stroke-width="1.300"/><circle cx="10" cy="10.500" r="4.500" stroke="${Bs}" stroke-width="1.300"/>`+L('M1 9A9.500 9.500 0 0 1 10 1V6A4.500 4.500 0 0 0 5.500 9.500Z','#797775',1.200,'#fafafa'),
b(.7,1,9,19)+w(9.700,1,9.500,6)+w(9.700,7,5,6)+g(14.700,7,4.500,6)+w(9.700,13,5,7)+w(14.700,13,4.500,7),
`<circle cx="10.500" cy="8.500" r="7" fill="#fafafa" stroke="${K}" stroke-width="1.200"/>`+L('M7 4L12 3L13 7L9 9L6 8ZM12 9L16 8L14 13L11 12Z','#218d42',.8,'#3aa055')+L('M4 3Q0 10 6 15Q11 18 16 15M10.500 17V20M4 20H17',K,1.500),
L('M1 2L8 1L12 3L19 2V10L17 18L11 20L5 17L1 10Z',K,1.200,'#c8c6c4')+L('M1 2L7 1L9 6L8 11L1 10ZM12 11L19 8L18 17L12 19Z',Bs,1.200,F),
L('M1 15A9 9 0 0 1 19.500 15H14.500A4 4 0 0 0 6 15Z',Bs,1.200,F)+L('M1 15A9 9 0 0 1 8 6L10 11A4 4 0 0 0 6 15Z',K,1.200,'#fafafa')+L('M9.500 15L14 9',K,1.600),
w(.8,3,19,15)+'<text x="3" y="14.500" font-size="10.500" fill="#1a86d0" textLength="14.500" lengthAdjust="spacingAndGlyphs">123</text>',
w(.8,1,19,19)+L('M3.500 3V18','#979593',1)+L('M6 5H12M6 14H12',K,1.300)+L('M6 8H17M6 17H17',Bs,1.800),
w(.8,2.500,19,16.500)+L('M3 12L6 6L9 12Z','#218d42',1,'#5ab56f')+L('M11.500 5.500H17L14.300 11Z','#d13438',1,'#f08080')+L('M3 15.500H17','#979593',1.300),
w(.8,1,19,18)+`<rect x="1.500" y="1.700" width="17.500" height="4" fill="#c8c6c4"/>`+g(4,8.500,4,3)+g(4,13.500,4,3)+L('M9.500 10.500H20.500L17 15V21.500H13.500V15Z',K,1.400,'#fff'),
w(.8,1,19,19)+`<rect x="1.400" y="1.600" width="17.800" height="3" fill="#a19f9d"/>`+L('M1 5H19.500M1 10H19.500M1 15H19.500M7 5V20M13 5V20','#797775',1.100),
w(.8,1,19,19)+`<rect x="1.400" y="1.600" width="17.800" height="3" fill="#a19f9d"/><path d="M13 5h6v15H7V15h6Z" fill="#83beec"/><path d="M1 15h6v5H1Z" fill="#83beec"/>`+L('M1 5H19.500M1 10H19.500M1 15H19.500M7 5V20M13 5V20','#1268b3',1.100),
'<text x="5" y="17" font-size="17.500" font-weight="700" fill="#1a86c8" textLength="10" lengthAdjust="spacingAndGlyphs">R</text>',
'<text x="-1" y="16" font-size="17.500" font-weight="700" fill="#1a86c8" textLength="20" lengthAdjust="spacingAndGlyphs">Py</text>',
ax+L('M1 4H14',Bs,1.600)+`<circle cx="16" cy="4" r="2.600" fill="${F}" stroke="${Bs}"/>`+L('M1 9.500H10M1 14.500H5','#797775',1.200)+`<circle cx="11.500" cy="9.500" r="1.800" fill="#fff" stroke="#797775"/><circle cx="7" cy="14.500" r="1.800" fill="#fff" stroke="#797775"/>`,
L('M7 10H12M12 3H10V17H12',K,1.300)+b(.7,8,7,4.500)+b(12,1,7.500,4.500)+b(12,8,7.500,4.500)+b(12,15,7.500,4.500),
L('M1 2H19.500V15H9L4 19.500V15H1Z',Bs,1.400,'#fafafa'),
L('M4 3V1H19V19H2V10','#1268b3',1.200,F)+L('M12 3L9 9L12 12L5 19H13L15 11L18 8V3Z','#9ec9ea',1,'#fafafa')+'<path d="M-.5 0H6V6Q5 11 3 13Q0 9-.5 5Z" fill="#d87010"/><circle cx="2.800" cy="4" r="1.500" fill="#fff"/><circle cx="17.500" cy="18" r="3" fill="#d87010"/><circle cx="19" cy="12" r="1.700" fill="#d87010"/>',
L('M3 18H1V5Q1 3.500 2.500 3.500H18Q19.500 3.500 19.500 5V18H17',K,1.400)+`<path d="M7 8L10 11L7 14L4 11ZM14 8L17 11L14 14L11 11ZM10.500 12L13.500 15L10.500 18L7.500 15ZM6 14L8 16L6 18L4 16ZM15 14L17 16L15 18L13 16Z" fill="${K}"/><circle cx="7" cy="11" r="1" fill="#fff"/><circle cx="14" cy="11" r="1" fill="#fff"/>`,
`<g fill="${K}"><circle cx="2" cy="7.500" r="1"/><circle cx="10" cy="7.500" r="1"/><circle cx="18" cy="7.500" r="1"/></g>`];
define('viz-pane',`:host{display:block;width:226px;height:797px;background:#f3f2f1;border-left:1px solid #d8d6d4}
.h{display:flex;height:60px;align-items:center;padding:1px 15px 0;justify-content:space-between;font-weight:600;color:#484644}
.g{height:183px;padding:7px 0 0 13px;display:grid;grid-template-columns:repeat(6,35px);grid-auto-rows:30px;border-bottom:1px solid #d8d6d4}
.g span{display:block;width:21px;height:21px}.g .sel{width:28px;height:28px;margin:-4px;padding:2.500px;border:2px solid #605e5c;background:#d8d6d4}
.tabs{display:flex;height:46px;padding-left:15px;position:relative}.tabs b{position:absolute;left:15px;bottom:0;width:50px;height:5px;border-radius:2.500px;background:#f2c811}
.lab{padding-left:15px;margin-top:6px}.well{margin:7px 0 0 5px;width:213px;border:1px dashed #b8b6b4;border-radius:2px;background:#fff}
.chip{margin:4px 3px;height:29px;border:1px solid #c8c6c4;border-radius:2px;background:#ebe9e8;display:flex;align-items:center;justify-content:space-between;padding:0 4px 0 5px}
.big{padding-left:19px;margin-top:16.500px;font-weight:600;color:#484644}.o{display:flex;align-items:center;gap:5px;padding-left:23px}`,
`<div class="h">${T('Visualizations',123,20,'',28)}<svg width="9" height="16" viewBox="0 0 9 16"><path d="M.8 1L8 8L.8 15" stroke="${K}" stroke-width="1.300" fill="none"/></svg></div>
<div class="g">${viz.map((v,i)=>`<span class="${i===24?'sel':''}">${S(0,0,21,21,v)}</span>`).join('')}</div>
<div class="tabs">${S(1481,451,50,40,`<path stroke="${K}" stroke-width="1.400" d="M1494 461.500H1514"/><path stroke="${K}" stroke-width="1.400" stroke-dasharray="2.400 1.400" d="M1494.500 465.500H1518.500V473H1494.500ZM1494.500 477H1518.500V484.500H1494.500Z"/>`,'margin-right:13px')}
${S(1544,451,26,40,`<path stroke="${K}" stroke-width="1.400" d="M1546 461.700H1563.500V466.700H1546ZM1563.500 464H1567.500V470H1555.500V474M1553.500 474H1558V485.500H1553.500Z"/>`,'margin-right:22px')}
${S(1592,451,28,40,`<circle cx="1604.500" cy="471.500" r="9.800" stroke="${K}" stroke-width="1.500"/><path stroke="${K}" stroke-width="1.400" d="M1612 479L1619 486M1595 473L1600 469.500L1604 472L1612 465.500M1599 474.500V478M1603 475V481M1607 472V480.500M1611 470V476"/>`)}<b></b></div>
<div class="lab">${T('Field',30,15)}</div>
<div class="well" style="height:46px"><div class="chip">${T('city',23,15)}${S(1642,541,34,16,`<path stroke="${K}" stroke-width="1.200" d="M1642 545L1649 552L1656 545M1664 544L1674 554M1674 544L1664 554"/>`)}</div></div>
<div class="big">${T('Drill through',115,20,'',28)}</div>
<div style="padding-left:11px;margin-top:16.500px">${T('Cross-report',83,15)}</div>
<div class="o" style="margin-top:17px">${T('Off',20,15)}${S(1514,675,38,18,'<circle cx="1521.500" cy="683.500" r="6" stroke="#605e5c" stroke-width="3"/><path stroke="#605e5c" stroke-width="2" d="M1529 683H1552"/>')}</div>
<div style="padding-left:11px;margin-top:23px">${T('Keep all filters',92,15)}</div>
<div class="o" style="margin-top:17px">${T('On',19,15)}${S(1513,755,38,18,'<circle cx="1543.500" cy="763.500" r="7.500" fill="#605e5c"/><path stroke="#605e5c" stroke-width="2" d="M1514 763H1537"/>')}</div>
<div class="well" style="height:33px;margin-top:16px;padding:6px 0 0 11px">${T('Add drill-through fields here',188,15)}</div>`);

/* ---------- fields pane ---------- */
const chev=(up)=>`<svg width="15" height="9" viewBox="0 0 15 9" fill="none"><path d="${up?'M1 8L7.500 1.500L14 8':'M1 1L7.500 7.500L14 1'}" stroke="#484644" stroke-width="1.200"/></svg>`;
define('fields-pane',`:host{display:block;width:229px;height:797px;background:#f3f2f1;border-left:1px solid #d8d6d4}
.h{display:flex;height:60px;align-items:center;padding:1px 16px 0;justify-content:space-between;font-weight:600;color:#484644}
.s{display:flex;align-items:center;gap:11px;margin:5px 6px 0;height:37px;background:#fff;border:1px solid #c8c6c4;border-radius:2px;padding-left:13px;color:#3b3a39}
.r{display:flex;height:30.050px;align-items:center;padding-left:40px}.cb{width:15px;height:15px;border:1px solid #797775;border-radius:2px;background:#f8f8f8}.cb.on{background:#f2c811;border-color:#d8b20e}.sp{width:31px;display:flex;padding-left:3px}
.top{display:flex;height:51px;align-items:center;padding:4px 0 0 6px;margin-top:5px;border-top:1px solid #e5e3e1}`,
`<div class="h">${T('Fields',51,20,'',28)}<svg width="9" height="16" viewBox="0 0 9 16"><path d="M.8 1L8 8L.8 15" stroke="${K}" stroke-width="1.300" fill="none"/></svg></div>
<div class="s">${S(1711,280,20,20,`<circle cx="1724.500" cy="287.500" r="6.500" stroke="${K}" stroke-width="1.400"/><path stroke="${K}" stroke-width="1.500" d="M1719.500 292L1712 299"/>`)}${T('Search',48,15.500)}</div>
<div class="top">${chev(1)}${S(1714,329,36,30,`<rect x="1721.500" y="336.500" width="15" height="13" fill="#fff" stroke="${K}" stroke-width="1.500"/><path fill="${K}" d="M1721 336H1737V340H1721Z"/><path stroke="${K}" stroke-width="1.200" d="M1721 344H1737M1726.500 340V350M1731.500 340V350"/><circle cx="1738" cy="351.500" r="6.500" fill="#f2c811"/><path stroke="#484644" stroke-width="1.500" d="M1735 351.500L1737.300 354L1741 349.500"/>`)}${T('Sheet1',45,15,'margin-left:3px')}</div>
${[['Avg',25],['city',23,1],['Country',53],['lastupdate',70,2],['Max',28],['Min',25],['place',35],['Pollutants',65],['State',34]].map(a=>`<div class="r"${a[2]===2?' style="padding-left:15px"':''}>${a[2]===2?chev()+'<span style="width:10px"></span>':''}<span class="cb ${a[2]===1?'on':''}">${a[2]===1?'<svg width="13" height="13" fill="none"><path d="M3 6.500L5.500 9L10 4" stroke="#3b3a39" stroke-width="1.400"/></svg>':''}</span><span class="sp">${a[2]===2?`<svg width="17" height="17" viewBox="0 0 17 17" fill="none"><rect x="1.500" y="2.500" width="14" height="13" stroke="${K}" stroke-width="1.500"/><path d="M1 6.500H16M4.500 0V3M12.500 0V3" stroke="${K}" stroke-width="1.500"/><path d="M4 9.500H13M4 12.500H13" stroke="${K}" stroke-width="1.800" stroke-dasharray="2 1.500"/></svg>`:''}</span>${T(a[0],a[1],15,'margin-top:1.500px')}</div>`).join('')}`);

define('status-bar',`:host{display:flex;height:28px;background:#f3f2f1;border-top:1px solid #d2d0ce;justify-content:space-between;align-items:flex-start;padding:2px 7px 0 6px;color:#3b3a39}`,
`<div style="padding-top:1.500px">${T('PAGE 1 OF 1',76,13.500)}</div>${T('UPDATE AVAILABLE (CLICK TO DOWNLOAD)',271,13.500)}`);

/* ---------- task bar ---------- */
define('task-bar',`:host{display:flex;height:48px;align-items:center;color:#fff;background:radial-gradient(ellipse 220px 60px at 1380px 30px,#473e1c,transparent),radial-gradient(ellipse 300px 60px at 1700px 20px,#4a4020,transparent),linear-gradient(90deg,#5f5432,#5c5130 45%,#524826 65%,#4c421f 80%,#564b28)}
.k{height:46px;display:flex;align-items:center;justify-content:center}.on{background:#827b63;border:1px solid #a9a491}.a{background:#a9a595;border:1px solid #f0eee8;box-shadow:3px 0 0 -1px #6a6146,4px 0 0 -1px #d8d5c8,6px 0 0 -1px #6a6146,7px 0 0 -1px #d8d5c8}
.t{display:flex;flex-direction:column;align-items:center;gap:2px}`,
`<div class="k" style="width:61px;padding-right:1px">${S(14,1037,32,36,'<path fill="#fff" d="M14 1042L28 1040V1054.500H14ZM29.500 1039.700L46 1037.500V1054.500H29.500ZM14 1056H28V1070.500L14 1068.500ZM29.500 1056H46V1073L29.500 1070.700Z"/>')}</div>
<div class="k on" style="width:70px">${S(76,1036,40,40,'<path fill="#f6dd7e" stroke="#c8a84a" d="M78 1041Q78 1038 81 1038H90L92 1040H112Q115 1041 115 1044V1070Q115 1073 112 1073H81Q78 1073 78 1070Z"/><path fill="#fff" d="M83 1038h7v5h-7ZM92 1040h8v4h-8ZM102 1042h9v4h-9Z"/><path fill="#2f9c51" d="M83 1039h3v3h-3Z"/><path fill="#d13438" d="M92 1041h3v3h-3Z"/><path fill="#1a86d0" d="M103 1043h3v2h-3Z"/><path fill="#fcedb0" d="M78 1046H92L95 1043H115V1070Q115 1073 112 1073H81Q78 1073 78 1070Z"/><path fill="#8ccbec" stroke="#4d9cc8" d="M81 1075V1063Q81 1060 84 1060H108Q111 1060 111 1063V1075H105V1067H88V1075Z"/>')}</div>
<div class="k" style="width:76px">${S(150,1037,38,39,'<rect x="150" y="1037" width="38" height="38" fill="#008a00"/><path fill="#fff" d="M155 1050L182 1047V1071L155 1067.500Z"/><path stroke="#fff" stroke-width="1.800" d="M160 1049V1045Q161 1041 166 1042Q170 1043 170 1048M166 1048Q167 1042 172 1043"/><path fill="#008a00" d="M159.500 1054.500L165 1054V1059H159.500ZM166 1053.800L172 1053.300V1059H166ZM159.500 1060H165V1064.500L159.500 1064ZM166 1060H172V1065.300L166 1064.700Z"/>')}</div>
<div class="k on" style="width:70px">${S(223,1037,38,38,'<circle cx="242" cy="1056" r="18.500" fill="#fcd34a"/><path fill="#dd4b3e" d="M226 1046.700A18.500 18.500 0 0 1 258.500 1047.500H242L234.500 1060.500Z"/><path fill="#1a9c58" d="M225.800 1047A18.500 18.500 0 0 0 241 1074.500L249 1061L242 1064.500L234.500 1061Z"/><circle cx="242" cy="1056" r="8.600" fill="#fff"/><circle cx="242" cy="1056" r="6.900" fill="#4285f4"/>')}</div>
<div class="k" style="width:75px">${S(296,1039,38,34,'<path fill="#fff" d="M315 1040L334 1057L331 1060L328 1057.500V1072H318.500V1064H311.500V1072H302V1057.500L299 1060L296 1057Z"/>')}</div>
<div class="k" style="width:74px;margin-left:-1px">${S(368,1036,40,40,'<defs><linearGradient id="f" x1="1" y1="0" x2="0" y2="1"><stop offset="0" stop-color="#ffe040"/><stop offset=".45" stop-color="#ff8a1c"/><stop offset="1" stop-color="#f0205a"/></linearGradient></defs><circle cx="388" cy="1054" r="13" fill="#0a6fe0"/><path fill="url(#f)" d="M372 1045L373 1041L377 1045Q380 1043 384 1044L386 1041V1046L390 1050L383 1053Q385 1060 391 1060Q400 1058 397 1048Q396 1042 391 1039Q402 1041 402 1052L404 1049Q407 1057 404 1064Q398 1075 387 1074.500Q372 1073 370 1060Q368.500 1051 372 1045Z"/><path fill="#ffe040" d="M394 1037Q406 1044 406 1056Q405 1068 395 1072Q403 1060 399 1050Z"/>')}</div>
<div class="k" style="width:74px;padding-right:3px">${S(441,1036,42,40,'<path stroke="#5fd3f8" stroke-width="7" d="M449 1057.500H476Q476 1044 463 1044Q450 1045 450 1058Q451 1070 463 1070.500Q470 1070 475 1066"/><path stroke="#f2c22a" stroke-width="2.600" d="M445 1073Q439 1072 448 1056Q461 1038 476 1037Q482 1038 477 1047"/>')}</div>
<div class="k a" style="width:62px;margin-left:1px">${S(510,1036,40,40,'<rect x="510" y="1036" width="40" height="40" fill="#f2c811"/><path stroke="#252423" stroke-width="1.800" d="M520 1062H519Q516.500 1062 516.500 1059.500V1049Q516.500 1046.500 519 1046.500H540Q542.500 1046.500 542.500 1049V1059.500Q542.500 1062 540 1062H539"/><path stroke="#1a1a1a" stroke-width="3" stroke-linecap="round" d="M522.500 1062v3M527 1057v8M531.500 1060v5M536 1052v13"/>')}</div>
<div style="margin-left:auto">${S(1640,1040,130,34,'<path fill="#fff" d="M1650 1060L1655 1055L1660 1060Z"/><path stroke="#fff" stroke-width="1.400" d="M1679 1052V1059H1683V1052M1680 1049V1052M1682 1049V1052M1681 1059V1065H1685"/><path fill="#fff" d="M1685.500 1050H1695.500V1067H1685.500ZM1688.500 1048H1692.500V1050H1688.500Z"/><rect x="1687.500" y="1056" width="6" height="9" fill="#4c421f"/><path fill="#fff" d="M1709 1063h2v4h-2ZM1712 1060h2v7h-2ZM1715 1057h2v10h-2ZM1718 1053h2v14h-2ZM1721 1049h2v18h-2ZM1738 1054H1741L1746 1049V1066L1741 1061H1738Z"/><path stroke="#fff" stroke-width="1.300" d="M1748.500 1053Q1751 1057.500 1748.500 1062M1751.500 1051Q1755 1057.500 1751.500 1064M1754 1049Q1758.500 1057.500 1754 1066"/>')}</div>
<div class="t" style="margin-left:4px;width:30px">${T('ENG',29,15)}${T('US',18,15)}</div><div class="t" style="margin-left:18px;width:78px">${T('19:37',35,15)}${T('10-07-2020',76,15)}</div><div style="width:20px"></div>`);

define('power-app',`:host{display:block;width:1920px;height:1080px}.m{display:flex;height:797px}`,
`<title-bar></title-bar><ribbon-bar></ribbon-bar><div class="m"><nav-rail></nav-rail><div><report-page></report-page><page-tabs></page-tabs></div><filters-pane></filters-pane><viz-pane></viz-pane><fields-pane></fields-pane></div><status-bar></status-bar><task-bar></task-bar>`);
</script>
</body>
</html>
